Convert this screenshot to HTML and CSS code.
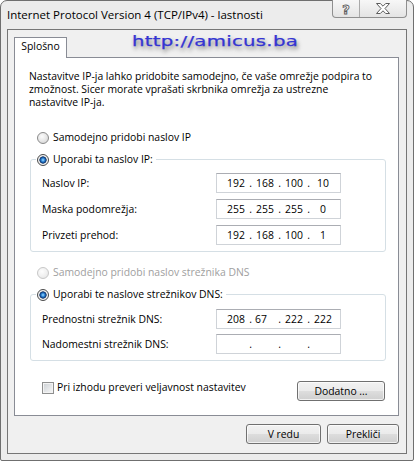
FILE: index.html
```html
<!DOCTYPE html>
<html lang="sl">
<head>
<meta charset="utf-8">
<title>Internet Protocol Version 4 (TCP/IPv4) - lastnosti</title>
<link rel="stylesheet" href="styles.css">
</head>
<body>
<div class="window">
  <div class="titlebar">
    <span class="title">Internet Protocol Version 4 (TCP/IPv4) - lastnosti</span>
    <div class="caption-buttons">
      <span class="cbtn help">?</span>
      <span class="cbtn close">
        <svg width="14" height="11" viewBox="0 0 14 11"><polygon points="0.5,0.5 4.3,0.5 7,3.2 9.7,0.5 13.5,0.5 9,5.5 13.5,10.5 9.7,10.5 7,7.8 4.3,10.5 0.5,10.5 5,5.5" fill="#fff" stroke="#5c5c5c" stroke-width="1" stroke-linejoin="round"/></svg>
      </span>
    </div>
  </div>
  <div class="client">
    <div class="tabs"><div class="tab">Splošno</div></div>
    <div class="page">
      <p class="desc">
        <span class="line">Nastavitve IP-ja lahko pridobite samodejno, če vaše omrežje podpira to</span>
        <span class="line">zmožnost. Sicer morate vprašati skrbnika omrežja za ustrezne</span>
        <span class="line">nastavitve IP-ja.</span>
      </p>
      <div class="option"><span class="radio"></span>Samodejno pridobi naslov IP</div>
      <fieldset class="group group-ip">
        <legend><span class="radio checked"></span>Uporabi ta naslov IP:</legend>
        <div class="row"><span class="lbl">Naslov IP:</span>
          <div class="ipbox"><span class="oct">192</span><span class="dot">.</span><span class="oct">168</span><span class="dot">.</span><span class="oct">100</span><span class="dot">.</span><span class="oct">10</span></div></div>
        <div class="row"><span class="lbl">Maska podomrežja:</span>
          <div class="ipbox"><span class="oct">255</span><span class="dot">.</span><span class="oct">255</span><span class="dot">.</span><span class="oct">255</span><span class="dot">.</span><span class="oct">0</span></div></div>
        <div class="row"><span class="lbl">Privzeti prehod:</span>
          <div class="ipbox"><span class="oct">192</span><span class="dot">.</span><span class="oct">168</span><span class="dot">.</span><span class="oct">100</span><span class="dot">.</span><span class="oct">1</span></div></div>
      </fieldset>
      <div class="option option-dns disabled"><span class="radio"></span>Samodejno pridobi naslov strežnika DNS</div>
      <fieldset class="group group-dns">
        <legend><span class="radio checked"></span>Uporabi te naslove strežnikov DNS:</legend>
        <div class="row"><span class="lbl">Prednostni strežnik DNS:</span>
          <div class="ipbox"><span class="oct">208</span><span class="dot">.</span><span class="oct oct-left">67</span><span class="dot">.</span><span class="oct">222</span><span class="dot">.</span><span class="oct">222</span></div></div>
        <div class="row"><span class="lbl">Nadomestni strežnik DNS:</span>
          <div class="ipbox"><span class="oct"></span><span class="dot">.</span><span class="oct"></span><span class="dot">.</span><span class="oct"></span><span class="dot">.</span><span class="oct"></span></div></div>
      </fieldset>
      <div class="footer">
        <div class="check-row"><span class="checkbox"></span>Pri izhodu preveri veljavnost nastavitev</div>
        <div class="btn btn-adv">Dodatno ...</div>
      </div>
    </div>
    <div class="dialog-buttons">
      <div class="btn btn-ok">V redu</div>
      <div class="btn btn-cancel">Prekliči</div>
    </div>
  </div>
  <div class="watermark">http://amicus.ba</div>
</div>
</body>
</html>
```

FILE: styles.css
```css
* { box-sizing: border-box; }
html, body { margin: 0; padding: 0; }
body {
  background: #ffffff;
  font-family: "Open Sans", "Noto Sans", sans-serif;
  font-size: 10.4px;
  line-height: 13px;
  color: #000;
}

.window {
  position: relative;
  width: 414px;
  height: 461px;
  border: 1px solid #6f6f6f;
  border-radius: 7px 7px 2px 2px;
  background: #ececec;
  padding: 0 6px 6px 6px;
  display: flex;
  flex-direction: column;
}

/* title bar */
.titlebar {
  height: 28px;
  flex: none;
  display: flex;
  align-items: flex-start;
}
.title {
  padding-top: 6px;
  font-size: 11.5px;
  line-height: 16px;
  color: #000;
}
.caption-buttons {
  margin-left: auto;
  margin-top: -1px;
  height: 18px;
  display: flex;
  border: 1px solid #8f8f8f;
  border-top: none;
  border-radius: 0 0 4px 4px;
  background: linear-gradient(#f7f7f7, #e4e4e4);
  overflow: hidden;
}
.cbtn {
  display: flex;
  align-items: center;
  justify-content: center;
  height: 17px;
}
.cbtn.help {
  width: 27px;
  border-right: 1px solid #a9a9a9;
  font-family: "DejaVu Sans", sans-serif;
  font-weight: bold;
  font-size: 13px;
  line-height: 13px;
  color: #ffffff;
  -webkit-text-stroke: 0.9px #5c5c5c;
  padding-top: 1px;
}
.cbtn.close {
  width: 46px;
}

/* client area */
.client {
  flex: 1;
  border: 1px solid #767676;
  background: #f0f0f0;
  padding: 7px 7px 9px 6px;
  display: flex;
  flex-direction: column;
}
.tabs {
  display: flex;
  flex: none;
}
.tab {
  position: relative;
  z-index: 1;
  width: 53px;
  height: 21px;
  margin-bottom: -1px;
  border: 1px solid #898c95;
  border-bottom: none;
  background: #ffffff;
  text-align: center;
  padding-top: 2px;
}
.page {
  width: 385px;
  height: 359px;
  flex: none;
  border: 1px solid #898c95;
  background: #ffffff;
  padding-top: 12px;
}
.desc {
  margin: 0 0 0 14px;
}
.line { display: block; white-space: nowrap; }

.option {
  display: flex;
  align-items: center;
  margin: 22px 0 0 22px;
  height: 13px;
}
.option-dns { margin-top: 14px; }
.option.disabled { color: #a0a0a0; }

.radio {
  width: 12px;
  height: 12px;
  flex: none;
  margin-right: 4px;
  border-radius: 50%;
  border: 1px solid #8a8a8a;
  background: radial-gradient(circle at 40% 35%, #fbfbfb 0, #e9e9e9 45%, #cdcdcd 100%);
}
.radio.checked {
  border-color: #4a4a4a;
  background: radial-gradient(circle at 50% 50%, #a6e4ff 0, #3b92e0 1.4px, #16549e 2.6px, #0c2f60 3.3px, #e8e8e8 3.9px, #f6f6f6 4.6px, #d9d9d9 6px);
}
.option.disabled .radio {
  border-color: #c7c7c7;
  background: radial-gradient(circle at 40% 35%, #fdfdfd 0, #f1f1f1 50%, #e2e2e2 100%);
}

.group {
  margin: 9px 12px 0 15px;
  padding: 7px 0 6px 0;
  min-width: 0;
  border: 1px solid #d5dfe5;
  border-radius: 3px;
}
.group-dns { padding-top: 8px; }
.group legend {
  display: flex;
  align-items: center;
  margin-left: 5px;
  padding: 0 3px 0 1px;
  height: 13px;
  line-height: 13px;
}
.row {
  display: grid;
  grid-template-columns: 174px 125px;
  align-items: center;
  margin-left: 11px;
}
.row + .row { margin-top: 6px; }
.group-dns .row + .row { margin-top: 5px; }

.ipbox {
  height: 20px;
  display: flex;
  align-items: center;
  padding-left: 8px;
  border: 1px solid #cfd3d8;
  border-top-color: #abadb3;
  background: #ffffff;
}
.oct {
  width: 22px;
  text-align: center;
}
.oct-left { padding-right: 8px; }
.dot {
  width: 7px;
  text-align: center;
}

.footer {
  margin: 20px 13px 0 27px;
  display: flex;
  justify-content: space-between;
  align-items: flex-start;
}
.check-row {
  display: flex;
  align-items: center;
  height: 13px;
}
.checkbox {
  width: 12px;
  height: 12px;
  margin-right: 3px;
  border: 1px solid #8e8f8f;
  background: linear-gradient(135deg, #cbcfd3 0%, #e4e6e8 55%, #f7f7f7 100%);
  box-shadow: inset 0 0 0 1px #f3f3f3;
}

.btn {
  height: 20px;
  display: flex;
  align-items: center;
  justify-content: center;
  border: 1px solid #707070;
  border-radius: 3px;
  background: linear-gradient(#f2f2f2 0%, #ebebeb 48%, #dddddd 52%, #cfcfcf 100%);
  box-shadow: inset 0 0 0 1px rgba(255,255,255,0.7);
}
.btn-adv { width: 88px; }

.dialog-buttons {
  margin-top: 8px;
  display: flex;
  justify-content: flex-end;
  gap: 6px;
}
.btn-ok { width: 75px; }
.btn-cancel { width: 72px; }

.watermark {
  position: absolute;
  left: 131px;
  top: 32px;
  font-family: "DejaVu Sans", sans-serif;
  font-size: 14.5px;
  line-height: 16px;
  letter-spacing: 0.2px;
  color: #3434d2;
  -webkit-text-stroke: 0.25px #3434d2;
  transform: scaleX(1.36);
  transform-origin: left center;
  text-shadow: 1px 3px 4px rgba(30, 30, 30, 0.6);
  white-space: nowrap;
}
```
